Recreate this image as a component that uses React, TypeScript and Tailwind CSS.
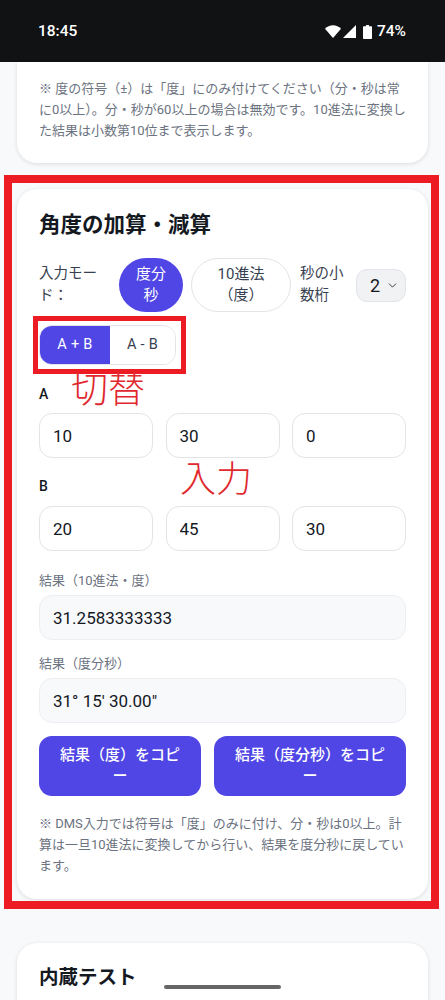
import { ChevronDown } from "lucide-react";

const font = { fontFamily: '"Roboto", "Noto Sans CJK JP", sans-serif' };

function StatusIcons() {
  return (
    <div className="flex items-center">
      <svg width="16" height="13" viewBox="0 0 16 13" fill="#fff">
        <path d="M8 13 0 3.800C2.100 1.500 4.900 0.200 8 0.200s5.900 1.300 8 3.600z" />
      </svg>
      <svg className="ml-[2px]" width="13" height="13" viewBox="0 0 13 13" fill="#fff">
        <path d="M13 0V13H0z" />
      </svg>
      <svg className="ml-[7px]" width="9" height="14" viewBox="0 0 9 14" fill="#fff">
        <path d="M3 0h3v1.200h2c.6 0 1 .4 1 1V13c0 .6-.4 1-1 1H1c-.6 0-1-.4-1-1V2.200c0-.6.4-1 1-1h2z" />
      </svg>
      <span className="ml-[5px] text-[15.500px] font-medium text-white">74%</span>
    </div>
  );
}

function NumberField({ value }: { value: string }) {
  return (
    <input
      type="text"
      defaultValue={value}
      className="h-[45px] w-[114px] rounded-[13px] border border-[#e2e4e8] bg-white px-[13px] text-[17px] text-[#14181f] outline-none"
    />
  );
}

function ResultField({ label, value }: { label: string; value: string }) {
  return (
    <div>
      <label className="block text-[13px] leading-[20px] text-[#6b7280]">{label}</label>
      <input
        type="text"
        readOnly
        defaultValue={value}
        className="mt-[4px] block h-[45px] w-full rounded-[13px] border border-[#eceef1] bg-[#f8f9fb] px-[13px] text-[17px] text-[#14181f] outline-none"
      />
    </div>
  );
}

export default function App() {
  return (
    <div style={font} className="relative h-[1000px] w-[445px] overflow-hidden bg-[#f8f9fb]">
      <div className="flex h-[62px] items-center justify-between bg-[#101214] pl-[38px] pr-[39px] pt-[1px]">
        <span className="text-[15.500px] font-medium text-white">18:45</span>
        <StatusIcons />
      </div>

      <div className="mx-[17px] rounded-b-[20px] bg-white px-[22px] pb-[22px] pt-[16px] text-[13px] leading-[21px] text-[#6b7280] shadow-[0_1px_4px_rgba(0,0,0,0.12)]">
        ※ 度の符号（±）は「度」にのみ付けてください（分・秒は常に0以上）。分・秒が60以上の場合は無効です。10進法に変換した結果は小数第10位まで表示します。
      </div>

      <div className="mx-[17px] mt-[26px] h-[710px] rounded-[20px] bg-white px-[22px] pt-[20px] shadow-[0_1px_4px_rgba(0,0,0,0.12)]">
        <h2 className="text-[21.500px] font-bold leading-[32px] text-[#14181f]">角度の加算・減算</h2>

        <div className="mt-[17px] flex items-center text-[#374151]">
          <span className="w-[64px] text-[14.500px] leading-[22px]">入力モード：</span>
          <button className="ml-[16px] h-[54px] w-[64px] rounded-full bg-[#4f46e5] px-[16px] text-[15px] leading-[21px] text-white">
            度分秒
          </button>
          <button className="ml-[8px] h-[54px] w-[100px] rounded-full border border-[#e2e4e8] bg-white px-[16px] text-[15px] leading-[21px] text-[#374151]">
            10進法（度）
          </button>
          <span className="ml-[9px] w-[48px] text-[14.500px] leading-[22px]">秒の小数桁</span>
          <div className="ml-[8px] flex h-[33px] w-[50px] items-center justify-between rounded-[11px] border border-[#e2e4e8] bg-[#f1f2f4] pl-[13px] pr-[6px] text-[18px] text-[#14181f]">
            2
            <ChevronDown size={13} strokeWidth={1.5} />
          </div>
        </div>

        <div className="mt-[13px] flex h-[40px] w-[137px] overflow-hidden rounded-[13px] border border-[#e2e4e8] text-[14.500px] tracking-[0.3px]">
          <button className="w-[70px] bg-[#4f46e5] text-white">A + B</button>
          <button className="flex-1 bg-white text-[#374151]">A - B</button>
        </div>

        <div className="mt-[19px] text-[14px] font-medium leading-[20px] text-[#14181f]">A</div>
        <div className="mt-[9px] flex justify-between">
          <NumberField value="10" />
          <NumberField value="30" />
          <NumberField value="0" />
        </div>

        <div className="mt-[18px] text-[14px] font-medium leading-[20px] text-[#14181f]">B</div>
        <div className="mt-[10px] flex justify-between">
          <NumberField value="20" />
          <NumberField value="45" />
          <NumberField value="30" />
        </div>

        <div className="mt-[20px]">
          <ResultField label="結果（10進法・度）" value="31.2583333333" />
        </div>
        <div className="mt-[14px]">
          <ResultField label="結果（度分秒）" value={`31° 15' 30.00"`} />
        </div>

        <div className="mt-[13px] flex justify-between">
          <button className="h-[60px] w-[162px] rounded-[13px] bg-[#4f46e5] px-[16px] text-[15px] font-medium leading-[21px] text-white">
            結果（度）をコピー
          </button>
          <button className="h-[60px] w-[192px] rounded-[13px] bg-[#4f46e5] px-[16px] text-[15px] font-medium leading-[21px] text-white">
            結果（度分秒）をコピー
          </button>
        </div>

        <p className="mt-[17px] text-[13px] leading-[21px] text-[#6b7280]">
          ※ DMS入力では符号は「度」のみに付け、分・秒は0以上。計算は一旦10進法に変換してから行い、結果を度分秒に戻しています。
        </p>
      </div>

      <div className="mx-[17px] mt-[44px] h-[120px] rounded-[20px] bg-white px-[22px] pt-[19px] shadow-[0_1px_4px_rgba(0,0,0,0.12)]">
        <h2 className="text-[19.500px] font-bold leading-[32px] text-[#14181f]">内蔵テスト</h2>
      </div>

      {/* annotations drawn over the screenshot */}
      <div className="absolute left-[4px] top-[175px] h-[734px] w-[435px] border-[8px] border-[#ed1c24]" />
      <div className="absolute left-[33px] top-[316px] h-[58px] w-[153px] border-[5px] border-[#ed1c24]" />
      <span className="absolute left-[71px] top-[366px] text-[37px] font-light leading-[50px] text-[#e0282e]">切替</span>
      <span className="absolute left-[180px] top-[455px] text-[36px] font-light leading-[50px] text-[#e0282e]">入力</span>

      <div className="absolute left-[164px] top-[985px] h-[4px] w-[117px] rounded-full bg-[#666666]" />
    </div>
  );
}
